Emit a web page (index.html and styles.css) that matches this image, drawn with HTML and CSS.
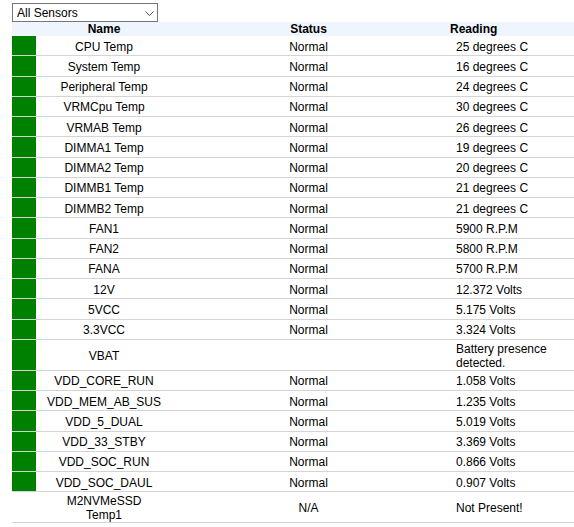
FILE: index.html
```html
<!DOCTYPE html>
<html>
<head>
<meta charset="utf-8">
<link rel="stylesheet" href="styles.css">
</head>
<body>
<div class="sensor-select">
  <span>All Sensors</span>
  <svg class="chev" width="9" height="5" viewBox="0 0 9 5"><path d="M0.5 0.5 L4.5 4.5 L8.5 0.5" fill="none" stroke="#4a5a4a" stroke-width="1"/></svg>
</div>
<table class="sensors">
  <colgroup>
    <col class="c-ind"><col class="c-name"><col class="c-status"><col class="c-reading">
  </colgroup>
  <thead>
    <tr><th></th><th class="h-name">Name</th><th class="h-status">Status</th><th class="h-reading">Reading</th></tr>
  </thead>
  <tbody>
    <tr><td class="ind ok"></td><td class="name">CPU Temp</td><td class="status">Normal</td><td class="reading">25 degrees C</td></tr>
    <tr><td class="ind ok"></td><td class="name">System Temp</td><td class="status">Normal</td><td class="reading">16 degrees C</td></tr>
    <tr><td class="ind ok"></td><td class="name">Peripheral Temp</td><td class="status">Normal</td><td class="reading">24 degrees C</td></tr>
    <tr><td class="ind ok"></td><td class="name">VRMCpu Temp</td><td class="status">Normal</td><td class="reading">30 degrees C</td></tr>
    <tr><td class="ind ok"></td><td class="name">VRMAB Temp</td><td class="status">Normal</td><td class="reading">26 degrees C</td></tr>
    <tr><td class="ind ok"></td><td class="name">DIMMA1 Temp</td><td class="status">Normal</td><td class="reading">19 degrees C</td></tr>
    <tr><td class="ind ok"></td><td class="name">DIMMA2 Temp</td><td class="status">Normal</td><td class="reading">20 degrees C</td></tr>
    <tr><td class="ind ok"></td><td class="name">DIMMB1 Temp</td><td class="status">Normal</td><td class="reading">21 degrees C</td></tr>
    <tr><td class="ind ok"></td><td class="name">DIMMB2 Temp</td><td class="status">Normal</td><td class="reading">21 degrees C</td></tr>
    <tr><td class="ind ok"></td><td class="name">FAN1</td><td class="status">Normal</td><td class="reading">5900 R.P.M</td></tr>
    <tr><td class="ind ok"></td><td class="name">FAN2</td><td class="status">Normal</td><td class="reading">5800 R.P.M</td></tr>
    <tr><td class="ind ok"></td><td class="name">FANA</td><td class="status">Normal</td><td class="reading">5700 R.P.M</td></tr>
    <tr><td class="ind ok"></td><td class="name">12V</td><td class="status">Normal</td><td class="reading">12.372 Volts</td></tr>
    <tr><td class="ind ok"></td><td class="name">5VCC</td><td class="status">Normal</td><td class="reading">5.175 Volts</td></tr>
    <tr><td class="ind ok"></td><td class="name">3.3VCC</td><td class="status">Normal</td><td class="reading">3.324 Volts</td></tr>
    <tr><td class="ind ok"></td><td class="name">VBAT</td><td class="status"></td><td class="reading">Battery presence<br>detected.</td></tr>
    <tr><td class="ind ok"></td><td class="name">VDD_CORE_RUN</td><td class="status">Normal</td><td class="reading">1.058 Volts</td></tr>
    <tr><td class="ind ok"></td><td class="name">VDD_MEM_AB_SUS</td><td class="status">Normal</td><td class="reading">1.235 Volts</td></tr>
    <tr><td class="ind ok"></td><td class="name">VDD_5_DUAL</td><td class="status">Normal</td><td class="reading">5.019 Volts</td></tr>
    <tr><td class="ind ok"></td><td class="name">VDD_33_STBY</td><td class="status">Normal</td><td class="reading">3.369 Volts</td></tr>
    <tr><td class="ind ok"></td><td class="name">VDD_SOC_RUN</td><td class="status">Normal</td><td class="reading">0.866 Volts</td></tr>
    <tr><td class="ind ok"></td><td class="name">VDD_SOC_DAUL</td><td class="status">Normal</td><td class="reading">0.907 Volts</td></tr>
    <tr><td class="ind"></td><td class="name">M2NVMeSSD<br>Temp1</td><td class="status">N/A</td><td class="reading">Not Present!</td></tr>
  </tbody>
</table>
</body>
</html>
```
FILE: styles.css
```css
html, body {
  margin: 0;
  padding: 0;
  background: #ffffff;
}
body {
  font-family: "Liberation Sans", Arial, sans-serif;
  font-size: 12px;
  color: #000000;
  padding: 3px 0 0 12px;
}
.sensor-select {
  box-sizing: border-box;
  width: 146px;
  height: 19px;
  border: 1px solid #767676;
  display: flex;
  align-items: center;
  justify-content: space-between;
  padding: 0 3px 0 4px;
  background: #ffffff;
}
.chev {
  display: block;
  margin-top: 1px;
}
.sensors {
  width: 562px;
  table-layout: fixed;
  border-collapse: separate;
  border-spacing: 0;
}
.c-ind { width: 24px; }
.c-name { width: 136px; }
.c-status { width: 273px; }
.c-reading { width: 129px; }
.sensors th {
  background: #eff5fd;
  height: 14px;
  padding: 0;
  line-height: 14px;
  font-weight: bold;
}
.h-name, .h-status { text-align: center; }
.h-reading { text-align: left; padding-left: 5px !important; }
.sensors td {
  box-sizing: border-box;
  height: 20.25px;
  padding: 2px 0 0;
  line-height: 14px;
  border-bottom: 1px solid #d4d4d4;
  vertical-align: middle;
}
.sensors td.ok { background: #008000; }
.sensors td.name, .sensors td.status { text-align: center; }
.sensors td.reading { text-align: left; padding-left: 11px; }
```
